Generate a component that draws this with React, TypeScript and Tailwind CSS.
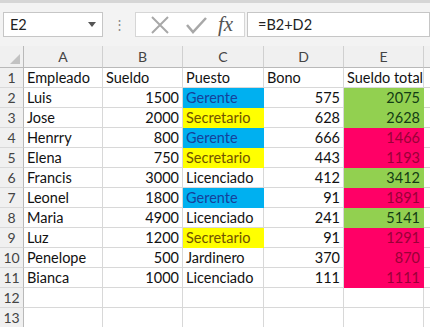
type Fill = "blue" | "yellow" | "green" | "pink" | null;

type Row = {
  name: string;
  sueldo: number;
  puesto: string;
  puestoFill: Fill;
  bono: number;
  total: number;
  totalFill: Fill;
};

const rows: Row[] = [
  { name: "Luis", sueldo: 1500, puesto: "Gerente", puestoFill: "blue", bono: 575, total: 2075, totalFill: "green" },
  { name: "Jose", sueldo: 2000, puesto: "Secretario", puestoFill: "yellow", bono: 628, total: 2628, totalFill: "green" },
  { name: "Henrry", sueldo: 800, puesto: "Gerente", puestoFill: "blue", bono: 666, total: 1466, totalFill: "pink" },
  { name: "Elena", sueldo: 750, puesto: "Secretario", puestoFill: "yellow", bono: 443, total: 1193, totalFill: "pink" },
  { name: "Francis", sueldo: 3000, puesto: "Licenciado", puestoFill: null, bono: 412, total: 3412, totalFill: "green" },
  { name: "Leonel", sueldo: 1800, puesto: "Gerente", puestoFill: "blue", bono: 91, total: 1891, totalFill: "pink" },
  { name: "Maria", sueldo: 4900, puesto: "Licenciado", puestoFill: null, bono: 241, total: 5141, totalFill: "green" },
  { name: "Luz", sueldo: 1200, puesto: "Secretario", puestoFill: "yellow", bono: 91, total: 1291, totalFill: "pink" },
  { name: "Penelope", sueldo: 500, puesto: "Jardinero", puestoFill: null, bono: 370, total: 870, totalFill: "pink" },
  { name: "Bianca", sueldo: 1000, puesto: "Licenciado", puestoFill: null, bono: 111, total: 1111, totalFill: "pink" },
];

const fillClass: Record<string, string> = {
  blue: "bg-[#00b0f0] border-[#00b0f0] text-[#16419a]",
  yellow: "bg-[#ffff00] border-[#ffff00] text-[#6f5200]",
  green: "bg-[#92d050] border-[#92d050] text-[#123d14]",
  pink: "bg-[#ff0066] border-[#ff0066] text-[#9a0038]",
  none: "bg-white border-[#d8d8d8] text-[#111]",
};

function Cell(props: { children?: React.ReactNode; right?: boolean; fill?: Fill }) {
  const { children, right, fill } = props;
  return (
    <div
      className={`h-5 border-r border-b px-[3px] leading-5 whitespace-nowrap overflow-hidden ${
        right ? "text-right" : "text-left"
      } ${fillClass[fill ?? "none"]}`}
    >
      {children}
    </div>
  );
}

function RowHead(props: { n: number }) {
  return (
    <div className="h-5 border-r border-r-[#b9b9b9] border-b border-b-[#d9d9d9] bg-[#f0f0f0] text-center leading-5 text-[#444] text-[14px]">
      {props.n}
    </div>
  );
}

function ColHead(props: { label: string }) {
  return (
    <div className="h-[22px] border-r border-r-[#d0d0d0] border-b border-b-[#b9b9b9] bg-[#f0f0f0] text-center leading-[22px] text-[#444] text-[14px]">
      {props.label}
    </div>
  );
}

export default function App() {
  return (
    <div
      className="w-[430px] h-[327px] overflow-hidden bg-[#f3f3f3] text-[14.5px]"
      style={{ fontFamily: "Lato, 'Liberation Sans', sans-serif" }}
    >
      {/* formula bar */}
      <div className="h-[46px] border-t-[3px] border-[#d6d6d6] pt-[9px]">
        <div className="flex h-[25px] items-stretch">
          <div className="ml-[3px] flex w-[100px] items-center justify-between border border-[#c6c6c6] bg-white pl-[6px] pr-[6px] text-[#222]">
            <span>E2</span>
            <svg width="8" height="5" viewBox="0 0 8 5">
              <path d="M0 0 L8 0 L4 5 Z" fill="#555" />
            </svg>
          </div>
          <div className="flex w-[32px] items-center justify-center text-[#888] text-[13px] leading-none">
            ⋮
          </div>
          <div className="flex w-[110px] items-center border border-[#d6d6d6] bg-white">
            <svg width="36" height="20" viewBox="0 0 36 20" className="ml-[6px]">
              <path d="M10 2 L26 18 M26 2 L10 18" stroke="#a8a8a8" strokeWidth="2" fill="none" />
            </svg>
            <svg width="36" height="20" viewBox="0 0 36 20">
              <path d="M9 10 L15 17 L28 3" stroke="#a8a8a8" strokeWidth="2.5" fill="none" />
            </svg>
            <span
              className="ml-[4px] text-[#555] text-[21px] italic leading-none"
              style={{ fontFamily: "'Liberation Serif', serif" }}
            >
              fx
            </span>
          </div>
          <div className="ml-[2px] flex flex-1 items-center border border-[#c6c6c6] bg-white pl-[10px] text-[#222]">
            =B2+D2
          </div>
        </div>
      </div>

      {/* grid */}
      <div className="grid grid-cols-[24px_79px_80px_81px_80px_80px_1fr] bg-white">
        <div className="relative h-[22px] border-r border-r-[#b9b9b9] border-b border-b-[#b9b9b9] bg-[#f0f0f0]">
          <svg width="10" height="10" viewBox="0 0 10 10" className="absolute right-[3px] bottom-[3px]">
            <path d="M10 0 L10 10 L0 10 Z" fill="#c2c2c2" />
          </svg>
        </div>
        {["A", "B", "C", "D", "E", ""].map((c, i) => (
          <ColHead key={i} label={c} />
        ))}

        <RowHead n={1} />
        <Cell>Empleado</Cell>
        <Cell>Sueldo</Cell>
        <Cell>Puesto</Cell>
        <Cell>Bono</Cell>
        <Cell>Sueldo total</Cell>
        <Cell />

        {rows.map((r, i) => (
          <div key={r.name} className="contents">
            <RowHead n={i + 2} />
            <Cell>{r.name}</Cell>
            <Cell right>{r.sueldo}</Cell>
            <Cell fill={r.puestoFill}>{r.puesto}</Cell>
            <Cell right>{r.bono}</Cell>
            <Cell right fill={r.totalFill}>
              {r.total}
            </Cell>
            <Cell />
          </div>
        ))}

        {[12, 13].map((n) => (
          <div key={n} className="contents">
            <RowHead n={n} />
            <Cell />
            <Cell />
            <Cell />
            <Cell />
            <Cell />
            <Cell />
          </div>
        ))}
      </div>
    </div>
  );
}
